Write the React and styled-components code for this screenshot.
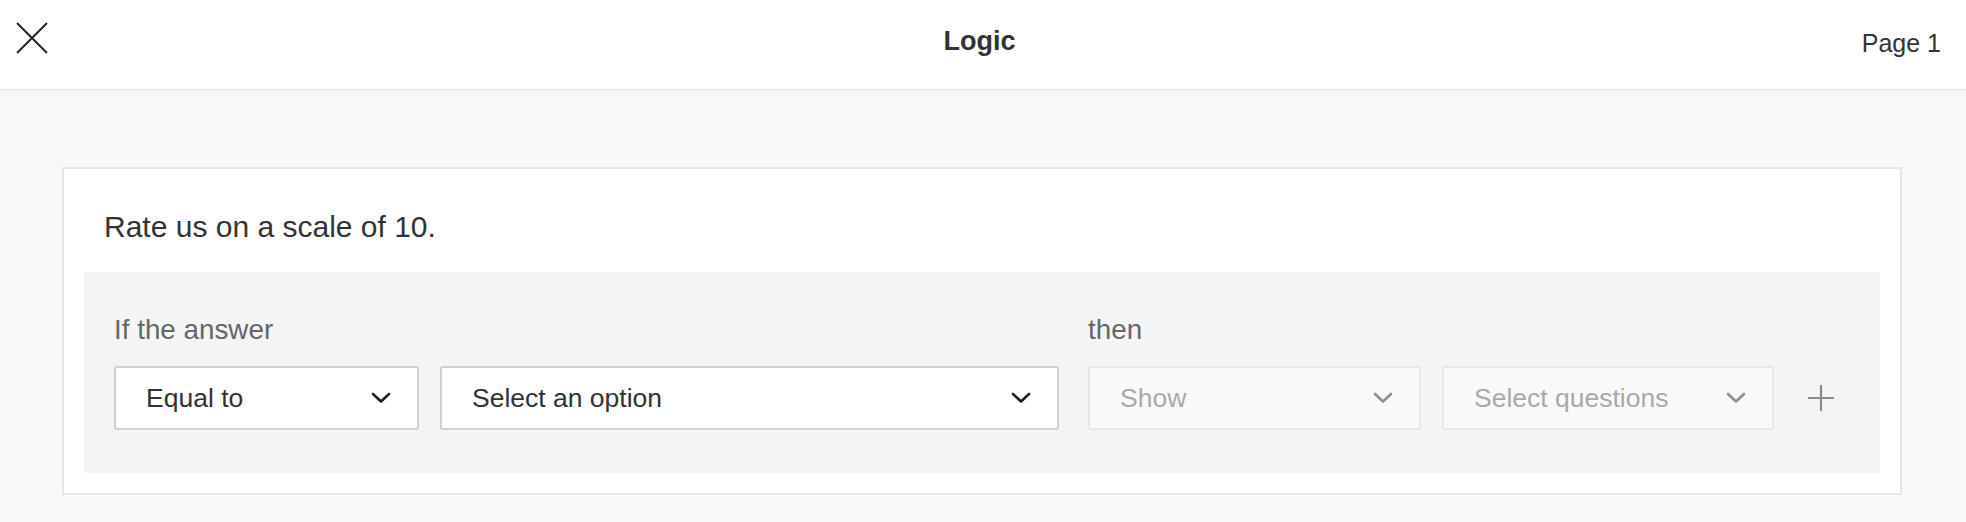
import React from 'react';
import styled, { createGlobalStyle } from 'styled-components';

const GlobalStyle = createGlobalStyle`
  html, body {
    margin: 0;
    padding: 0;
    background: #f8f8f8;
    font-family: "Liberation Sans", Helvetica, Arial, sans-serif;
    color: #333;
  }
  * {
    box-sizing: border-box;
  }
`;

const Page = styled.div`
  width: 1966px;
  height: 522px;
  overflow: hidden;
  background: #f8f8f8;
`;

const Header = styled.header`
  height: 90px;
  background: #fff;
  border-bottom: 1px solid #e4e4e4;
  box-shadow: 0 1px 2px rgba(0, 0, 0, 0.04);
  display: grid;
  grid-template-columns: 1fr auto 1fr;
  align-items: center;
  padding: 0 25px 0 16px;
`;

const CloseButton = styled.button`
  justify-self: start;
  width: 32px;
  height: 32px;
  padding: 0;
  margin-top: -13px;
  border: none;
  background: none;
  cursor: pointer;
  display: flex;
`;

const Title = styled.h1`
  margin: -8px 0 0 0;
  font-size: 27px;
  font-weight: bold;
  color: #333;
  line-height: 32px;
  padding-left: 2px;
`;

const PageLabel = styled.span`
  justify-self: end;
  font-size: 25px;
  color: #333;
  line-height: 30px;
  margin-top: -3px;
`;

const Main = styled.main`
  padding: 77px 64px 0 62px;
`;

const Card = styled.section`
  background: #fff;
  border: 2px solid #e6e6e6;
  padding: 40px 20px 20px 20px;
`;

const Question = styled.p`
  margin: 0 0 27px 20px;
  font-size: 30px;
  line-height: 36px;
  color: #333;
`;

const RulePanel = styled.div`
  background: #f4f4f4;
  padding: 42px 30px 43px 30px;
  display: flex;
  align-items: flex-end;
`;

const Group = styled.div`
  display: flex;
  flex-direction: column;
  margin-right: ${(p) => p.$gapAfter || 0}px;
`;

const GroupLabel = styled.div`
  font-size: 27.8px;
  line-height: 32px;
  color: #666;
  margin-bottom: 20px;
`;

const Controls = styled.div`
  display: flex;
  align-items: center;
  gap: 21px;
`;

const Select = styled.div`
  width: ${(p) => p.$width}px;
  height: 64px;
  display: flex;
  align-items: center;
  justify-content: space-between;
  padding: 0 26px 0 30px;
  border-radius: 3px;
  font-size: 26.5px;
  background: ${(p) => (p.$disabled ? '#f9f9f9' : '#fff')};
  border: 2px solid ${(p) => (p.$disabled ? '#e7e7e7' : '#d0d0d0')};
  color: ${(p) => (p.$disabled ? '#a9a9a9' : '#333')};
  cursor: ${(p) => (p.$disabled ? 'default' : 'pointer')};
`;

const AddButton = styled.button`
  margin-left: 32px;
  width: 30px;
  height: 64px;
  padding: 0;
  border: none;
  background: none;
  display: flex;
  align-items: center;
  justify-content: center;
  cursor: pointer;
`;

const Chevron = ({ disabled }) => (
  <svg width="20" height="12" viewBox="0 0 20 12" fill="none">
    <path
      d="M2 2 L10 9.5 L18 2"
      stroke={disabled ? '#8f8f8f' : '#1e1e1e'}
      strokeWidth="2.6"
      strokeLinecap="round"
      strokeLinejoin="round"
    />
  </svg>
);

function App() {
  return (
    <>
      <GlobalStyle />
      <Page>
        <Header>
          <CloseButton aria-label="close">
            <svg width="32" height="32" viewBox="0 0 32 32" fill="none">
              <path d="M1 1 L31 31 M31 1 L1 31" stroke="#222" strokeWidth="2" />
            </svg>
          </CloseButton>
          <Title>Logic</Title>
          <PageLabel>Page 1</PageLabel>
        </Header>
        <Main>
          <Card>
            <Question>Rate us on a scale of 10.</Question>
            <RulePanel>
              <Group $gapAfter={29}>
                <GroupLabel>If the answer</GroupLabel>
                <Controls>
                  <Select $width={305}>
                    Equal to
                    <Chevron />
                  </Select>
                  <Select $width={619}>
                    Select an option
                    <Chevron />
                  </Select>
                </Controls>
              </Group>
              <Group>
                <GroupLabel>then</GroupLabel>
                <Controls>
                  <Select $width={333} $disabled>
                    Show
                    <Chevron disabled />
                  </Select>
                  <Select $width={332} $disabled>
                    Select questions
                    <Chevron disabled />
                  </Select>
                </Controls>
              </Group>
              <AddButton aria-label="add rule">
                <svg width="28" height="28" viewBox="0 0 28 28" fill="none">
                  <path d="M14 1 V27 M1 14 H27" stroke="#8a8a8a" strokeWidth="2.2" />
                </svg>
              </AddButton>
            </RulePanel>
          </Card>
        </Main>
      </Page>
    </>
  );
}

export default App;
